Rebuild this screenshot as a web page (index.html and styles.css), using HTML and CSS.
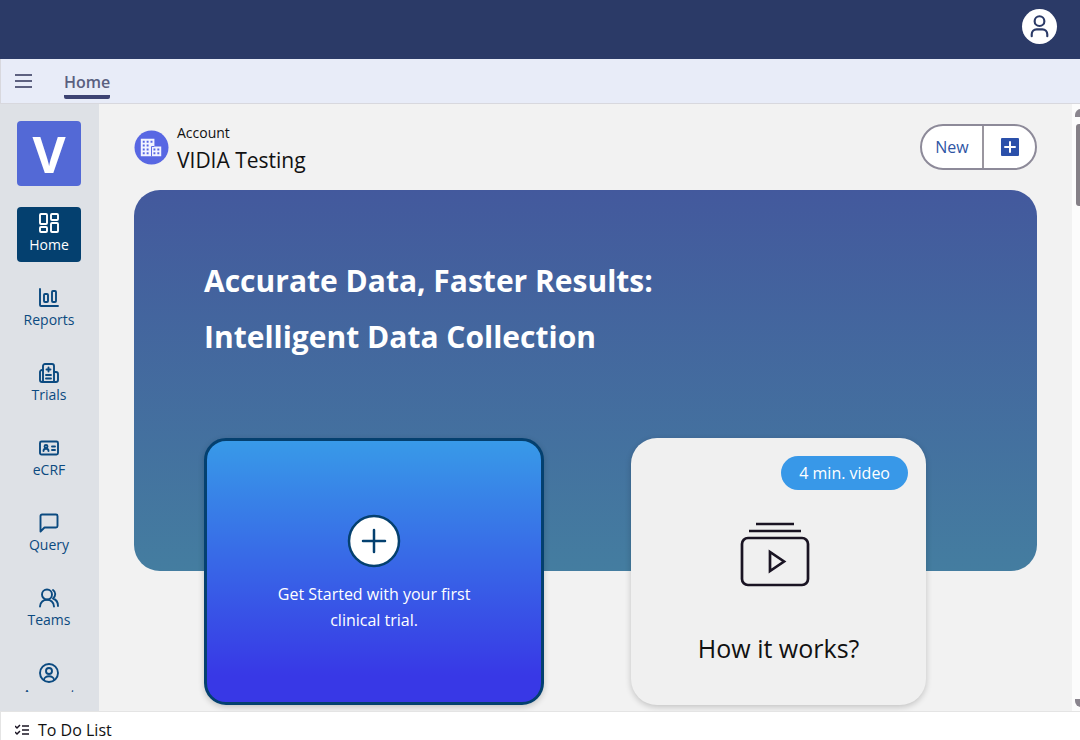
FILE: index.html
```html
<!DOCTYPE html>
<html lang="en">
<head>
    <meta charset="UTF-8">
    <meta name="viewport" content="width=device-width, initial-scale=1.0">
    <title>Home - VIDIA Testing</title>

    <link rel="stylesheet" href="styles.css">
</head>
<body>
    <header class="topbar">
        <button type="button" class="profile-btn" aria-label="Profile">
            <svg width="35" height="35" viewBox="0 0 36 36" fill="none" stroke="#2b3a67" stroke-width="2.200" stroke-linecap="round">
                <circle cx="18" cy="12.500" r="5"/>
                <path d="M10 28v-2a5 5 0 0 1 5-5h6a5 5 0 0 1 5 5v2"/>
            </svg>
        </button>
    </header>

    <div class="tabs">
        <button type="button" class="menu-btn" aria-label="Menu">
            <svg width="18" height="14" viewBox="0 0 18 14" stroke="#5d6180" stroke-width="2">
                <path d="M0 1h17M0 7h17M0 13h17"/>
            </svg>
        </button>
        <a href="#" class="tab">Home</a>
    </div>

    <div class="layout">
        <aside class="sidebar">
            <a href="#" class="logo">V</a>
            <nav class="nav">
                <a href="#" class="nav-item active">
                    <svg class="icon" viewBox="0 0 20 20">
                        <rect x="1" y="1" width="7" height="10" rx="1"/>
                        <rect x="12" y="1" width="7" height="6" rx="1"/>
                        <rect x="1" y="14" width="7" height="5" rx="1"/>
                        <rect x="12" y="10" width="7" height="9" rx="1"/>
                    </svg>
                    Home
                </a>
                <a href="#" class="nav-item">
                    <svg class="icon" viewBox="0 0 20 20">
                        <path d="M1 1v16a1 1 0 0 0 1 1h17"/>
                        <rect x="5" y="6" width="4" height="8" rx="1"/>
                        <rect x="13" y="3" width="4" height="11" rx="1"/>
                    </svg>
                    Reports
                </a>
                <a href="#" class="nav-item">
                    <svg class="icon" viewBox="0 0 20 20">
                        <path d="M4 19V3a2 2 0 0 1 2-2h7a2 2 0 0 1 2 2v16"/>
                        <path d="M4 7H3a2 2 0 0 0-2 2v8a2 2 0 0 0 2 2h14a2 2 0 0 0 2-2v-6a2 2 0 0 0-2-2h-2"/>
                        <path d="M9.5 4.500v4M7.500 6.500h4M7 12h5M7 15.500h5"/>
                    </svg>
                    Trials
                </a>
                <a href="#" class="nav-item">
                    <svg class="icon" viewBox="0 0 20 20">
                        <rect x="1" y="3.500" width="18" height="13" rx="1.500"/>
                        <circle cx="7" cy="8.500" r="1.500"/>
                        <path d="M4.500 13c0-3 5-3 5 0M13 8.500h3M13 12h3"/>
                    </svg>
                    eCRF
                </a>
                <a href="#" class="nav-item">
                    <svg class="icon" viewBox="0 0 20 20">
                        <path d="M1.500 18.500V3a1.500 1.500 0 0 1 1.500-1.500h14a1.500 1.500 0 0 1 1.500 1.500v10a1.500 1.500 0 0 1-1.500 1.500H5.500z"/>
                    </svg>
                    Query
                </a>
                <a href="#" class="nav-item">
                    <svg class="icon" viewBox="0 0 20 20">
                        <circle cx="8" cy="6.500" r="5"/>
                        <path d="M1 18.500c0-9 14-9 14 0M14 2c3 2 3 6 0 8.500 3 1 5 4 5 7.500"/>
                    </svg>
                    Teams
                </a>
                <a href="#" class="nav-item">
                    <svg class="icon" viewBox="0 0 20 20">
                        <circle cx="10" cy="10" r="9"/>
                        <circle cx="10" cy="8" r="3"/>
                        <path d="M5 17c0-5 10-5 10 0"/>
                    </svg>
                    Account
                </a>
            </nav>
        </aside>

        <main class="content">
            <div class="account-row">
                <svg class="account-icon" viewBox="0 0 36 36">
                    <circle cx="18" cy="18" r="17.500" fill="#5867e3"/>
                    <path d="M7 9h14v8h7v10H7z" fill="#f2f4ff"/>
                    <path d="M18 27V17h3" fill="none" stroke="#5867e3"/>
                    <path d="M9 11h2v2H9zM13 11h2v2h-2zM17 11h2v2h-2zM9 15h2v2H9zM13 15h2v2h-2zM9 19h2v2H9zM13 19h2v2h-2zM9 23h2v2H9zM13 23h2v2h-2zM20 19h2v2h-2zM24 19h2v2h-2zM20 23h2v2h-2zM24 23h2v2h-2z" fill="#5867e3"/>
                </svg>
                <div class="account-text">
                    <p class="account-label">Account</p>
                    <h1 class="account-name">VIDIA Testing</h1>
                </div>
                <div class="new-group">
                    <button type="button" class="new-btn">New</button>
                    <button type="button" class="add-btn" aria-label="Add">
                        <svg width="18" height="18" viewBox="0 0 18 18">
                            <rect width="18" height="18" rx="1" fill="#2b50aa"/>
                            <path d="M9 4v10M4 9h10" stroke="#fff" stroke-width="2" stroke-linecap="round"/>
                        </svg>
                    </button>
                </div>
            </div>

            <section class="hero">
                <h2>Accurate Data, Faster Results:<br>Intelligent Data Collection</h2>
            </section>

            <div class="cards">
                <button type="button" class="card start-card">
                    <svg width="54" height="54" viewBox="0 0 54 54" stroke="#04406f" stroke-linecap="round">
                        <circle cx="27" cy="27" r="25" fill="#fff" stroke-width="2.500"/>
                        <path d="M27 16v22M16 27h22" stroke-width="2.500"/>
                    </svg>
                    <span>Get Started with your first<br>clinical trial.</span>
                </button>
                <a href="#" class="card video-card">
                    <span class="badge">4 min. video</span>
                    <svg width="78" height="66" viewBox="0 0 78 66" fill="none" stroke="#1a1423" stroke-width="2.700">
                        <path d="M16 2h38M9 9h52"/>
                        <rect x="2" y="16" width="66" height="47" rx="6"/>
                        <path d="M30 30v19l14-9.500z"/>
                    </svg>
                    <span class="video-title">How it works?</span>
                </a>
            </div>
        </main>

        <div class="scroll-track">
            <span class="arrow-up"></span>
            <span class="thumb"></span>
            <span class="arrow-down"></span>
        </div>
    </div>

    <footer class="todo">
        <svg width="14" height="12" viewBox="0 0 14 12" fill="none" stroke="#1a1423" stroke-width="1.500">
            <path d="M0 2l2 2 3-3M0 8l2 2 3-3M7 2h7M7 6h7M7 10h7"/>
        </svg>
        <span>To Do List</span>
    </footer>
</body>
</html>
```
FILE: styles.css
```css
* {
    box-sizing: border-box;
}

body {
    margin: 0;
    display: flex;
    flex-direction: column;
    height: 100vh;
    overflow: hidden;
    font-family: "Open Sans", "Noto Sans", sans-serif;
    color: #111;
    background-color: #f2f2f2;
}

button {
    font: inherit;
    padding: 0;
    border: none;
    background: none;
    cursor: pointer;
}

a {
    color: inherit;
    text-decoration: none;
}

h1, h2, p {
    margin: 0;
}

svg {
    display: block;
    flex: none;
}

/* top bars */
.topbar {
    flex: none;
    height: 59px;
    padding: 9px 23px;
    display: flex;
    justify-content: flex-end;
    align-items: flex-start;
    background-color: #2b3a67;
}

.profile-btn {
    border-radius: 50%;
    background-color: #fff;
}

.tabs {
    flex: none;
    height: 45px;
    padding-left: 14px;
    display: flex;
    align-items: center;
    gap: 31px;
    background-color: #e8ecf8;
    border-left: 1px solid #d8d8de;
    border-bottom: 1px solid #d8d8de;
}

.tab {
    margin-top: 4px;
    padding-top: 2px;
    font-size: 16px;
    font-weight: 600;
    line-height: 26px;
    color: #5a5f80;
    border-bottom: 4px solid #3d4373;
    border-radius: 2px;
}

.layout {
    flex: 1;
    min-height: 0;
    display: flex;
}

/* sidebar */
.sidebar {
    flex: none;
    width: 99px;
    padding: 17px 18px 19px 17px;
    display: flex;
    flex-direction: column;
    gap: 21px;
    background-color: #dee1e6;
}

.logo {
    flex: none;
    height: 65px;
    border-radius: 4px;
    background-color: #5369d6;
    color: #fff;
    font-size: 51px;
    font-weight: 700;
    line-height: 65px;
    text-align: center;
}

.nav {
    flex: 1;
    min-height: 0;
    display: flex;
    flex-direction: column;
    gap: 20px;
    overflow: hidden;
}

.nav-item {
    flex: none;
    height: 55px;
    padding-top: 6px;
    display: flex;
    flex-direction: column;
    align-items: center;
    border-radius: 4px;
    color: #0b4a80;
    font-size: 14px;
    line-height: 24px;
}

.nav-item.active {
    background-color: #04406f;
    color: #fff;
}

.icon {
    width: 20px;
    height: 20px;
    fill: none;
    stroke: currentColor;
    stroke-width: 1.9;
    stroke-linecap: round;
    stroke-linejoin: round;
}

/* main area */
.content {
    flex: 1;
    min-width: 0;
    padding: 16px 35px 0;
    overflow: hidden;
}

.account-row {
    display: flex;
    align-items: center;
    gap: 8px;
    height: 54px;
}

.account-icon {
    width: 35px;
    height: 35px;
}

.account-text {
    flex: 1;
}

.account-label {
    font-size: 14px;
    line-height: 26px;
}

.account-name {
    font-size: 21px;
    font-weight: 400;
    line-height: 28px;
}

.new-group {
    display: flex;
    width: 117px;
    height: 46px;
    border: 2px solid #8d8a99;
    border-radius: 23px;
    background-color: #fff;
    overflow: hidden;
}

.new-btn {
    width: 62px;
    color: #2f55a4;
    font-size: 16px;
    border-right: 2px solid #9a969f;
}

.add-btn {
    flex: 1;
    display: flex;
    align-items: center;
    justify-content: center;
}

.hero {
    height: 381px;
    margin-top: 16px;
    padding: 63px 70px;
    border-radius: 26px;
    background: linear-gradient(#43599d, #447da0);
}

.hero h2 {
    color: #fff;
    font-size: 30px;
    font-weight: 700;
    line-height: 56px;
}

.cards {
    display: grid;
    grid-template-columns: 15fr 13fr;
    gap: 87px;
    margin-top: -133px;
    padding: 0 111px 0 70px;
}

.card {
    height: 267px;
    display: flex;
    flex-direction: column;
    align-items: center;
    border-radius: 26px;
    box-shadow: 0 2px 6px rgba(0, 0, 0, 0.2);
}

.start-card {
    justify-content: center;
    gap: 13px;
    padding-top: 4px;
    border: 3px solid #04406f;
    border-radius: 22px;
    background: linear-gradient(#389ae8, #3838e6 90%);
    color: #fff;
    font-size: 16px;
    line-height: 26px;
}

.video-card {
    padding: 18px;
    background-color: #f0f0f0;
}

.badge {
    align-self: flex-end;
    margin-bottom: 32px;
    padding: 0 18px;
    border-radius: 17px;
    background-color: #3898e8;
    color: #fff;
    font-size: 16px;
    line-height: 34px;
}

.video-title {
    margin-top: 43px;
    font-size: 25px;
    line-height: 34px;
}

/* scrollbar */
.scroll-track {
    flex: none;
    width: 8px;
    padding: 5px 0 4px 3px;
    display: flex;
    flex-direction: column;
    background-color: #fcfcfc;
    overflow: hidden;
}

.arrow-up,
.arrow-down {
    width: 10px;
    height: 8px;
    background-color: #8a858e;
}

.arrow-up {
    border-radius: 6px 0 0 0;
}

.arrow-down {
    margin-top: auto;
    border-radius: 0 0 0 6px;
}

.thumb {
    width: 8px;
    height: 82px;
    margin: 7px 0 0 1px;
    border-radius: 3px;
    background-color: #858087;
}

/* bottom bar */
.todo {
    flex: none;
    height: 29px;
    padding: 6px 14px 0;
    display: flex;
    align-items: flex-start;
    gap: 9px;
    border-left: 1px solid #e4e4e4;
    border-top: 1px solid #e4e4e4;
    background-color: #fff;
    font-size: 16px;
    line-height: 24px;
    overflow: hidden;
}

.todo svg {
    margin-top: 6px;
}
```
